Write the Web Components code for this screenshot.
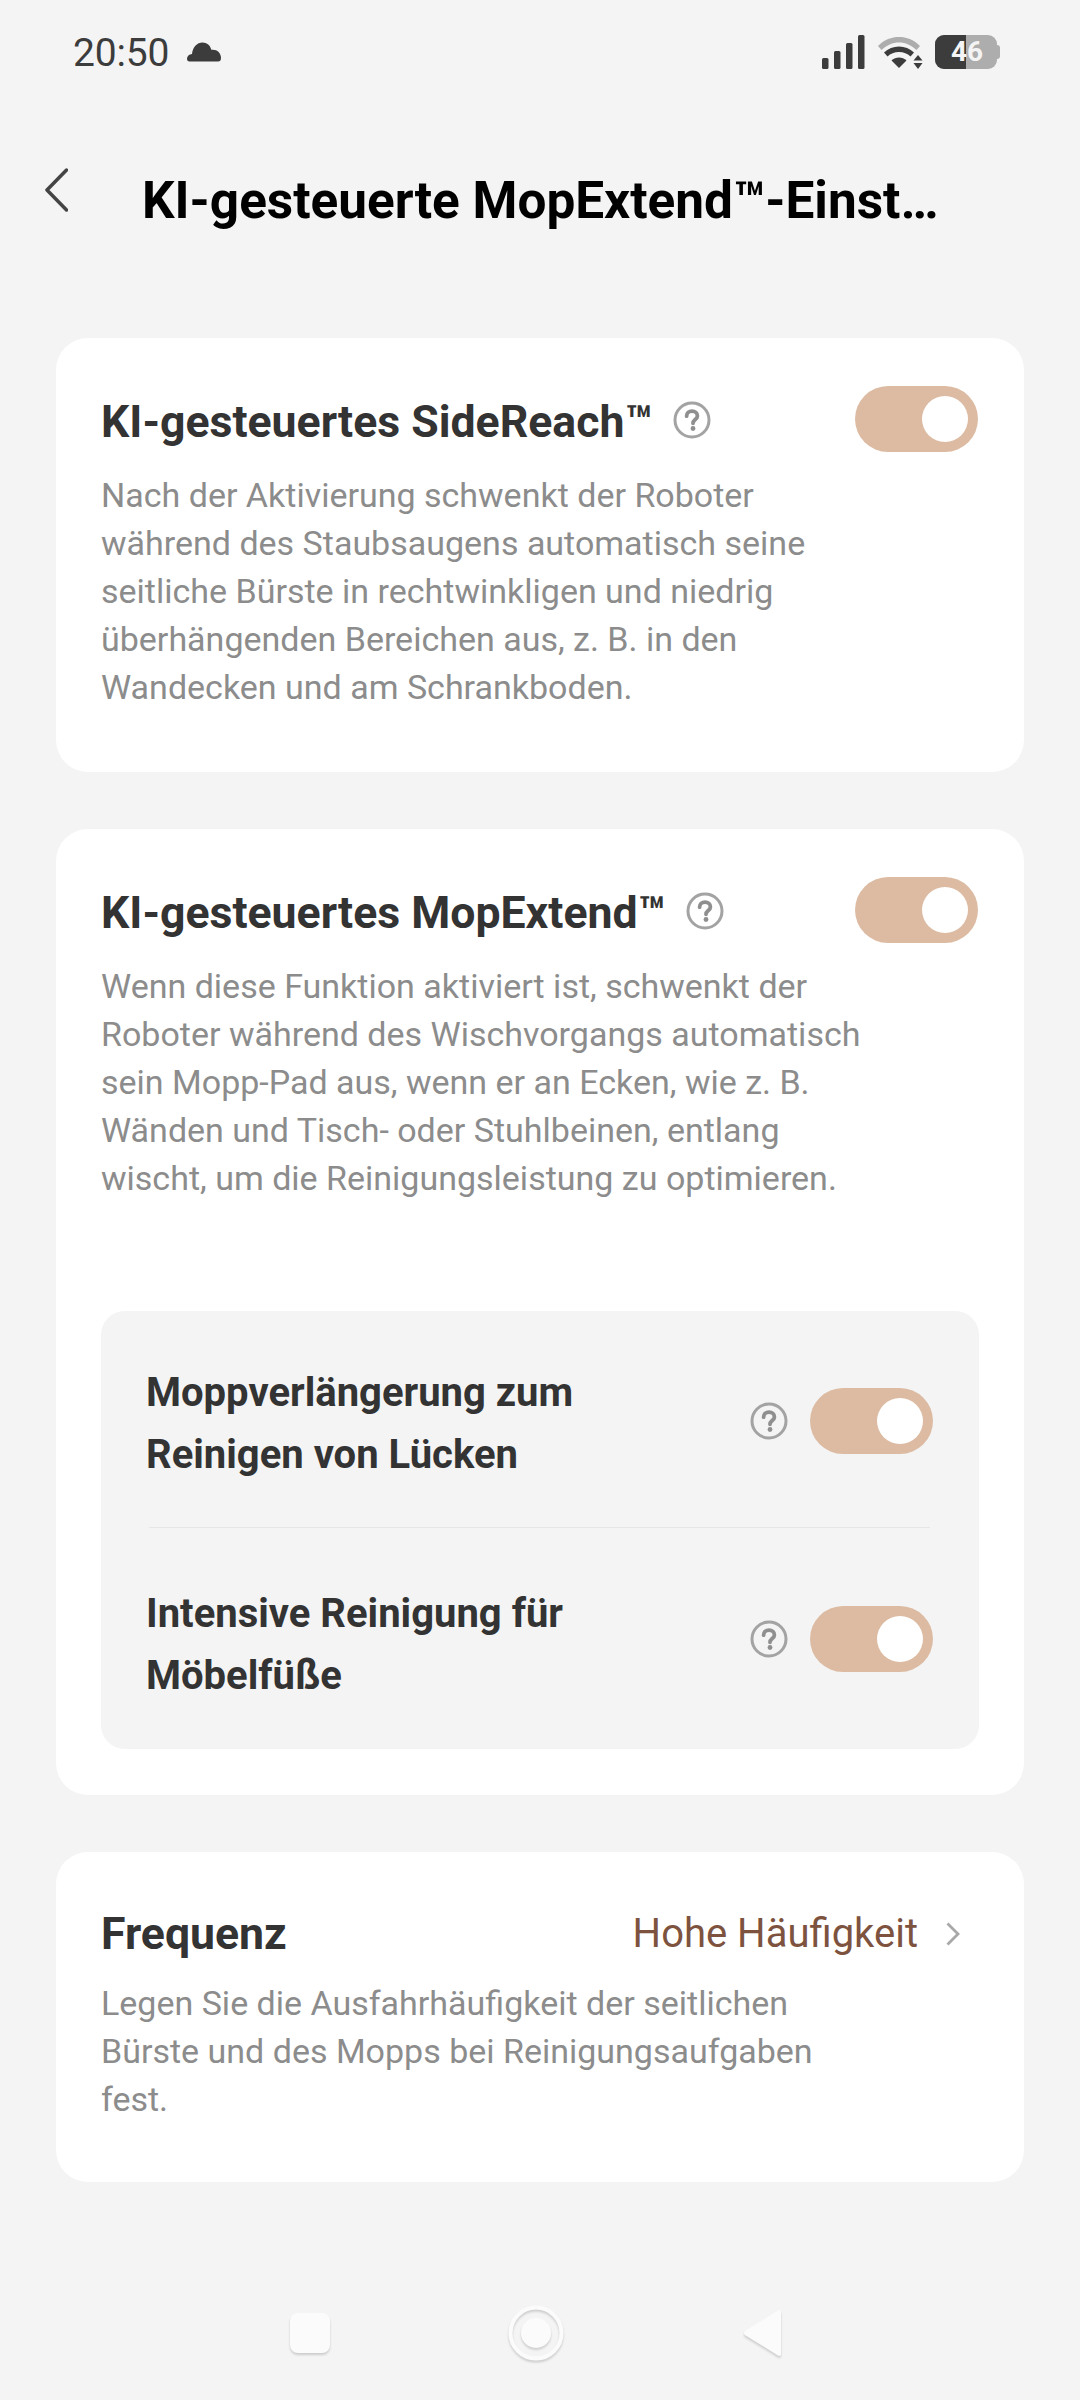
<!DOCTYPE html>
<html lang="de">
<head>
<meta charset="utf-8">
<title>MopExtend</title>
<style>
  html, body { margin: 0; background: #f4f4f4; }
  body { width: 1080px; height: 2400px; overflow: hidden; font-family: Roboto, sans-serif; display: flex; flex-direction: column; }
</style>
</head>
<body>
<status-bar></status-bar>
<top-bar>KI-gesteuerte MopExtend™-Einst…</top-bar>
<main-list>
  <setting-card>
    <card-head slot="head">KI-gesteuertes SideReach™</card-head>
    <card-text>Nach der Aktivierung schwenkt der Roboter<br>während des Staubsaugens automatisch seine<br>seitliche Bürste in rechtwinkligen und niedrig<br>überhängenden Bereichen aus, z. B. in den<br>Wandecken und am Schrankboden.</card-text>
  </setting-card>
  <setting-card>
    <card-head slot="head">KI-gesteuertes MopExtend™</card-head>
    <card-text>Wenn diese Funktion aktiviert ist, schwenkt der<br>Roboter während des Wischvorgangs automatisch<br>sein Mopp-Pad aus, wenn er an Ecken, wie z. B.<br>Wänden und Tisch- oder Stuhlbeinen, entlang<br>wischt, um die Reinigungsleistung zu optimieren.</card-text>
    <sub-panel>
      <sub-row>Moppverlängerung zum<br>Reinigen von Lücken</sub-row>
      <sub-row divided>Intensive Reinigung für<br>Möbelfüße</sub-row>
    </sub-panel>
  </setting-card>
  <setting-card compact>
    <frequency-head slot="head" value="Hohe Häufigkeit">Frequenz</frequency-head>
    <card-text>Legen Sie die Ausfahrhäufigkeit der seitlichen<br>Bürste und des Mopps bei Reinigungsaufgaben<br>fest.</card-text>
  </setting-card>
</main-list>
<nav-bar></nav-bar>

<script>
const HELP_ICON = `<svg width="38" height="38" viewBox="0 0 38 38" fill="none"><circle cx="19" cy="19" r="17" stroke="#a3a3a3" stroke-width="3"/><path d="M13.6 15.200c0-3.100 2.400-5 5.400-5s5.400 1.900 5.400 4.700c0 3.600-4.400 3.700-4.400 7.400" stroke="#8f8f8f" stroke-width="3.800" stroke-linecap="round"/><circle cx="20" cy="27.500" r="2.400" fill="#8f8f8f"/></svg>`;

class StatusBar extends HTMLElement {
  constructor() {
    super();
    this.attachShadow({ mode: 'open' });
    this.shadowRoot.innerHTML = `
      <style>
        :host { display: flex; align-items: flex-start; height: 130px; padding: 35px 80px 0 73px; box-sizing: border-box; color: #3c3c3c; }
        .time { font-size: 39px; line-height: 34px; margin-top: 1px; letter-spacing: -0.2px; }
        .cloud { margin: 7px 0 0 18px; }
        .right { margin-left: auto; display: flex; gap: 11px; align-items: flex-start; }
      </style>
      <span class="time">20:50</span>
      <svg class="cloud" width="34" height="20" viewBox="0 0 34 20"><path d="M2.500 19.500C.8 19.500 0 18.400 0 16.800c0-2.600 2-4.600 5-4.700C5.500 5.400 10 .5 15.500.5c4.500 0 7.800 3 8.800 7.300 .5-.1 1-.1 1.500-.1 4.600 0 8.200 3.400 8.200 8.200 0 2.200-1 3.600-3 3.600z" fill="#3c3c3c"/></svg>
      <div class="right">
        <svg width="43" height="34" viewBox="0 0 43 34" fill="#3c3c3c">
          <rect x="0" y="23" width="6.500" height="11" rx="1.500"/><rect x="12" y="16" width="6.500" height="18" rx="1.500"/><rect x="24" y="8" width="6.500" height="26" rx="1.500"/><rect x="36" y="0" width="6.500" height="34" rx="1.500"/>
        </svg>
        <svg width="48" height="34" viewBox="0 0 48 34">
          <path d="M2 11C8.500 4.500 15.500 2 23 2s14.500 2.500 21 9l-3.500 4C35 10 29.500 7.500 23 7.500S11 10 5.500 15z" fill="#adadad"/>
          <path d="M8 17.500C12 13.500 17.500 11.500 23 11.500s11 2 15 6l-3.500 4C31.500 18.500 27.500 17 23 17s-8.500 1.500-11.500 4.500z" fill="#3c3c3c"/>
          <path d="M15.500 25.500c2-1.800 4.800-3 7.500-3s5.500 1.200 7.500 3L23 33z" fill="#3c3c3c"/>
          <path d="M42 20l4.500 5.500h-9zM42 34l-4.500-6h9z" fill="#3c3c3c"/>
        </svg>
        <battery-level></battery-level>
      </div>`;
  }
}

class BatteryLevel extends HTMLElement {
  constructor() {
    super();
    this.attachShadow({ mode: 'open' });
    this.shadowRoot.innerHTML = `
      <style>
        :host { display: block; position: relative; width: 65px; height: 34px; }
        .body { width: 62px; height: 34px; border-radius: 9px; overflow: hidden; background: #adadad; display: flex; }
        .fill { width: 31px; background: #3c3c3c; }
        .cap { position: absolute; right: 0; top: 10px; width: 3px; height: 14px; border-radius: 0 3px 3px 0; background: #adadad; }
        .num { position: absolute; left: 16px; width: 30px; top: 0; line-height: 34px; text-align: center; font-size: 28px; font-weight: 700; color: #f4f4f4; }
      </style>
      <div class="body"><div class="fill"></div></div><div class="cap"></div><div class="num">46</div>`;
  }
}

class TopBar extends HTMLElement {
  constructor() {
    super();
    this.attachShadow({ mode: 'open' });
    this.shadowRoot.innerHTML = `
      <style>
        :host { display: flex; align-items: center; height: 78px; padding-left: 45px; margin: 21px 0 109px; color: #000; }
        svg { flex: none; margin-right: 74px; }
        .t { font-size: 51.3px; font-weight: 700; white-space: nowrap; margin-top: 20px; }
      </style>
      <svg width="23" height="44" viewBox="0 0 23 44" fill="none"><path d="M21.500 2L2 22l19.500 20" stroke="#444" stroke-width="3.500" stroke-linecap="round" stroke-linejoin="round"/></svg>
      <span class="t"><slot></slot></span>`;
  }
}

class MainList extends HTMLElement {
  constructor() {
    super();
    this.attachShadow({ mode: 'open' });
    this.shadowRoot.innerHTML = `
      <style>:host { display: flex; flex-direction: column; gap: 57px; padding: 0 56px; flex: 1; }</style>
      <slot></slot>`;
  }
}

class SettingCard extends HTMLElement {
  constructor() {
    super();
    this.attachShadow({ mode: 'open' });
    this.shadowRoot.innerHTML = `
      <style>
        :host { display: block; background: #fff; border-radius: 32px; padding: 48px 46px 61px 45px; }
        :host([compact]) { padding-bottom: 59px; }
      </style>
      <slot name="head"></slot><slot></slot>`;
  }
}

class ToggleSwitch extends HTMLElement {
  constructor() {
    super();
    this.attachShadow({ mode: 'open' });
    this.shadowRoot.innerHTML = `
      <style>
        :host { display: flex; align-items: center; justify-content: flex-end; flex: none; width: 123px; height: 66px; padding-right: 10px; box-sizing: border-box; border-radius: 33px; background: #dcbba2; }
        i { width: 46px; height: 46px; border-radius: 50%; background: #fff; }
      </style>
      <i></i>`;
  }
}

class CardHead extends HTMLElement {
  constructor() {
    super();
    this.attachShadow({ mode: 'open' });
    this.shadowRoot.innerHTML = `
      <style>
        :host { display: flex; align-items: center; height: 66px; }
        .t { font-size: 44.6px; font-weight: 700; color: #333; white-space: nowrap; margin-top: 6px; }
        svg { margin-left: 20px; flex: none; margin-top: 2px; }
        toggle-switch { margin-left: auto; }
      </style>
      <span class="t"><slot></slot></span>${HELP_ICON}<toggle-switch></toggle-switch>`;
  }
}

class FrequencyHead extends HTMLElement {
  constructor() {
    super();
    this.attachShadow({ mode: 'open' });
    this.shadowRoot.innerHTML = `
      <style>
        :host { display: flex; align-items: center; height: 60px; padding-top: 7px; box-sizing: border-box; }
        .t { font-size: 44.6px; font-weight: 700; color: #333; }
        .v { margin-left: auto; font-size: 40px; color: #7d5340; }
        svg { margin: 0 18px 0 28px; flex: none; }
      </style>
      <span class="t"><slot></slot></span><span class="v"></span>
      <svg width="14" height="24" viewBox="0 0 14 24" fill="none"><path d="M1.500 1.500L12 12 1.500 22.500" stroke="#a8a8a8" stroke-width="2.800"/></svg>`;
    this.shadowRoot.querySelector('.v').textContent = this.getAttribute('value');
  }
}

class CardText extends HTMLElement {
  constructor() {
    super();
    this.attachShadow({ mode: 'open' });
    this.shadowRoot.innerHTML = `
      <style>:host { display: block; font-size: 34px; line-height: 48px; color: #8c8c8c; margin-top: 19px; white-space: nowrap; }</style>
      <slot></slot>`;
  }
}

class SubPanel extends HTMLElement {
  constructor() {
    super();
    this.attachShadow({ mode: 'open' });
    this.shadowRoot.innerHTML = `
      <style>:host { display: block; background: #f4f4f4; border-radius: 24px; margin: 109px -1px -15px 0; padding: 0 49px 0 48px; }</style>
      <slot></slot>`;
  }
}

class SubRow extends HTMLElement {
  constructor() {
    super();
    this.attachShadow({ mode: 'open' });
    this.shadowRoot.innerHTML = `
      <style>
        :host { display: flex; align-items: center; height: 216px; padding-top: 3px; box-sizing: border-box; }
        :host([divided]) { border-top: 1px solid #e6e6e6; height: 222px; padding-top: 0; }
        .t { font-size: 40px; font-weight: 700; line-height: 62px; color: #333; white-space: nowrap; margin: 7px 0 0 -3px; }
        :host([divided]) .t { margin-top: 13px; }
        svg { margin-left: auto; flex: none; }
        toggle-switch { margin: 0 -3px 0 22px; }
      </style>
      <span class="t"><slot></slot></span>${HELP_ICON}<toggle-switch></toggle-switch>`;
  }
}

class NavBar extends HTMLElement {
  constructor() {
    super();
    this.attachShadow({ mode: 'open' });
    this.shadowRoot.innerHTML = `
      <style>
        :host { display: flex; align-items: center; height: 56px; padding: 0 0 0 290px; margin-bottom: 39px; gap: 178px; }
        svg { overflow: visible; flex: none; filter: drop-shadow(0 2px 1px rgba(0,0,0,.16)); }
      </style>
      <svg width="40" height="40" viewBox="0 0 40 40"><rect width="40" height="40" rx="8" fill="#fbfbfb"/></svg>
      <svg width="56" height="56" viewBox="0 0 56 56" fill="none"><circle cx="28" cy="28" r="25.500" stroke="#fbfbfb" stroke-width="4"/><circle cx="28" cy="28" r="15" fill="#fbfbfb"/></svg>
      <svg style="margin-left:2px" width="37" height="46" viewBox="0 0 37 46"><path d="M34 .5c1.500-1 3-.2 3 1.500v42c0 1.700-1.500 2.500-3 1.500L1.200 25.200c-1.600-1.100-1.600-3.300 0-4.400z" fill="#fbfbfb"/></svg>`;
  }
}

customElements.define('status-bar', StatusBar);
customElements.define('battery-level', BatteryLevel);
customElements.define('top-bar', TopBar);
customElements.define('main-list', MainList);
customElements.define('setting-card', SettingCard);
customElements.define('toggle-switch', ToggleSwitch);
customElements.define('card-head', CardHead);
customElements.define('frequency-head', FrequencyHead);
customElements.define('card-text', CardText);
customElements.define('sub-panel', SubPanel);
customElements.define('sub-row', SubRow);
customElements.define('nav-bar', NavBar);
</script>
</body>
</html>
